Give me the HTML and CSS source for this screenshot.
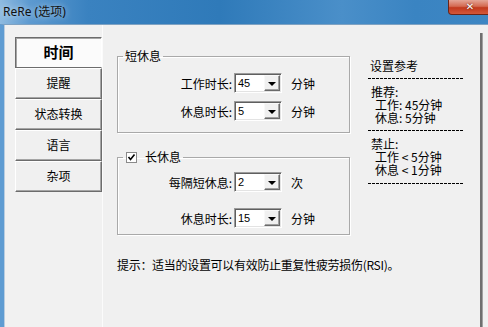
FILE: index.html
```html
<!DOCTYPE html>
<html lang="zh-CN">
<head>
  <meta charset="UTF-8" />
  <title>ReRe (选项)</title>
  <link rel="stylesheet" href="styles.css">
</head>
<body>
  <div class="window">
    <div class="titlebar">
      <span class="title">ReRe (选项)</span>
      <span class="close-btn">&#x2715;</span>
    </div>

    <div class="frame">
      <div class="sidebar">
        <div class="tab active">时间</div>
        <div class="tab">提醒</div>
        <div class="tab">状态转换</div>
        <div class="tab">语言</div>
        <div class="tab">杂项</div>
      </div>

      <div class="content">
        <div class="top-row">
          <div class="groups">
            <fieldset class="group short">
              <legend>短休息</legend>
              <div class="row">
                <label>工作时长:</label>
                <div class="combo"><span class="val">45</span><span class="drop"></span></div>
                <span class="unit">分钟</span>
              </div>
              <div class="row">
                <label>休息时长:</label>
                <div class="combo"><span class="val">5</span><span class="drop"></span></div>
                <span class="unit">分钟</span>
              </div>
            </fieldset>

            <fieldset class="group long">
              <legend>
                <span class="check">
                  <svg width="9" height="9" viewBox="0 0 9 9"><path d="M1.5 4 L3.5 6.5 L7.5 1.5" fill="none" stroke="#000" stroke-width="1.6"/></svg>
                </span>
                长休息
              </legend>
              <div class="row">
                <label>每隔短休息:</label>
                <div class="combo"><span class="val">2</span><span class="drop"></span></div>
                <span class="unit">次</span>
              </div>
              <div class="row">
                <label>休息时长:</label>
                <div class="combo"><span class="val">15</span><span class="drop"></span></div>
                <span class="unit">分钟</span>
              </div>
            </fieldset>
          </div>

          <div class="notes">
            <div class="note-title">设置参考</div>
            <div class="dash"></div>
            <div class="note-block">
              <div>推荐:</div>
              <div class="sub">工作: 45分钟</div>
              <div class="sub">休息: 5分钟</div>
            </div>
            <div class="dash"></div>
            <div class="note-block">
              <div>禁止:</div>
              <div class="sub">工作 &lt; 5分钟</div>
              <div class="sub">休息 &lt; 1分钟</div>
            </div>
            <div class="dash last"></div>
          </div>
        </div>

        <div class="hint">提示：适当的设置可以有效防止重复性疲劳损伤(RSI)。</div>
      </div>

      <div class="edge"></div>
      <div class="spacer"></div>
    </div>
  </div>
</body>
</html>
```

FILE: styles.css
```css
body {
  margin: 0;
  width: 488px;
  height: 327px;
  overflow: hidden;
  background: #f0f0f0;
  font-family: "Noto Sans CJK SC", "Noto Sans", sans-serif;
  font-size: 12px;
  color: #000;
}

.window {
  display: flex;
  flex-direction: column;
  height: 327px;
}

.titlebar {
  height: 24px;
  display: flex;
  justify-content: space-between;
  align-items: flex-start;
  background: linear-gradient(90deg, #8fbbe0 0%, #5d9ad0 6%, #3a82c0 18%, #2f7ab9 45%, #4a8fc9 70%, #3a84c2 85%, #3d86c3 100%);
  overflow: hidden;
}

.title {
  margin: 4px 0 0 3px;
  font-family: "Noto Sans", "Noto Sans CJK SC", sans-serif;
  font-size: 12px;
  line-height: 15px;
  color: #111;
  text-shadow: 0 0 6px rgba(255,255,255,0.7);
}

.close-btn {
  width: 44px;
  height: 15px;
  margin-right: -4px;
  box-sizing: border-box;
  border: 1px solid #6b2418;
  border-top: none;
  border-radius: 0 0 4px 4px;
  background: linear-gradient(180deg, #e4a597 0%, #d46a52 45%, #c2391e 55%, #d4583a 100%);
  color: #fff;
  font-family: "DejaVu Sans", sans-serif;
  font-size: 10px;
  font-weight: bold;
  line-height: 14px;
  text-align: center;
  text-shadow: 0 0 2px #4a1208;
}

.frame {
  flex: 1;
  display: flex;
  border-left: 4px solid #5f9cd2;
  border-top: 1px solid #7fa2c2;
}

.sidebar {
  width: 87px;
  padding: 12px 0 0 10px;
  border-left: 1px solid #b9cde0;
  border-right: 1px solid #fbfbfb;
  background: #f1f1f1;
}

.tab {
  height: 31px;
  box-sizing: border-box;
  border: 1px solid;
  border-color: #fff #6c6c6c #6c6c6c #fff;
  box-shadow: inset -1px -1px #a5a5a5;
  background: #f0f0f0;
  text-align: center;
  line-height: 28px;
}

.tab.active {
  border-color: #6c6c6c #fff #6c6c6c #6c6c6c;
  box-shadow: inset 1px 1px #a5a5a5;
  background: #fbfbfb;
  font-size: 15px;
  font-weight: bold;
}

.content {
  flex: 1;
  padding: 0 0 0 14px;
  display: flex;
  flex-direction: column;
}

.top-row {
  display: flex;
}

.groups {
  width: 233px;
  padding-top: 24px;
}

.group {
  margin: 0;
  padding: 10px 0 11px 0;
  border: 1px solid #a9a9a9;
  box-shadow: 1px 1px #fff, inset 1px 1px #fff;
}

.group legend {
  margin-left: 5px;
  padding: 0 2px;
  line-height: 14px;
  display: flex;
  align-items: center;
}

.group.long {
  margin-top: 17px;
  padding: 8px 0 6px 0;
}

.group.long .row + .row {
  margin-top: 16px;
}

.check {
  width: 9px;
  height: 9px;
  margin: 0 8px 0 1px;
  border: 1px solid #8a8a8a;
  background: #fff;
  display: flex;
}

.row {
  display: flex;
  align-items: center;
  height: 20px;
}

.row + .row {
  margin-top: 8px;
}

.row label {
  width: 114px;
  text-align: right;
  padding-right: 2px;
}

.combo {
  width: 48px;
  height: 20px;
  box-sizing: border-box;
  border: 1px solid;
  border-color: #9b9b9b #fff #fff #9b9b9b;
  box-shadow: inset 1px 1px #5f5f5f, inset -1px -1px #e3e3e3;
  background: #fff;
  display: flex;
  align-items: center;
  justify-content: space-between;
  padding: 0 1px 0 3px;
}

.val {
  font-family: "Liberation Sans", sans-serif;
  font-size: 11px;
}

.drop {
  width: 16px;
  height: 16px;
  box-sizing: border-box;
  border: 1px solid;
  border-color: #f8f8f8 #6a6a6a #6a6a6a #f8f8f8;
  box-shadow: inset -1px -1px #a0a0a0;
  background: #f0f0f0;
  display: flex;
  align-items: center;
  justify-content: center;
}

.drop::after {
  content: "";
  border-left: 4px solid transparent;
  border-right: 4px solid transparent;
  border-top: 4px solid #000;
  margin-top: 1px;
}

.unit {
  margin-left: 9px;
}

.notes {
  width: 96px;
  margin-left: 18px;
  padding-top: 34px;
  line-height: 13px;
}

.note-title {
  padding-left: 2px;
}

.dash {
  height: 1px;
  margin: 6px 0;
  background: repeating-linear-gradient(90deg, #000 0 3px, transparent 3px 4px);
}

.dash.last {
  margin-top: 7px;
}

.note-block {
  padding-left: 3px;
}

.sub {
  padding-left: 4px;
}

.hint {
  margin-top: 23px;
  line-height: 14px;
  letter-spacing: -0.3px;
}

.edge {
  width: 2px;
  margin-top: 8px;
  background: #6f6f6f;
  box-shadow: 1px 0 #a0a0a0;
}

.spacer {
  width: 6px;
}
```
